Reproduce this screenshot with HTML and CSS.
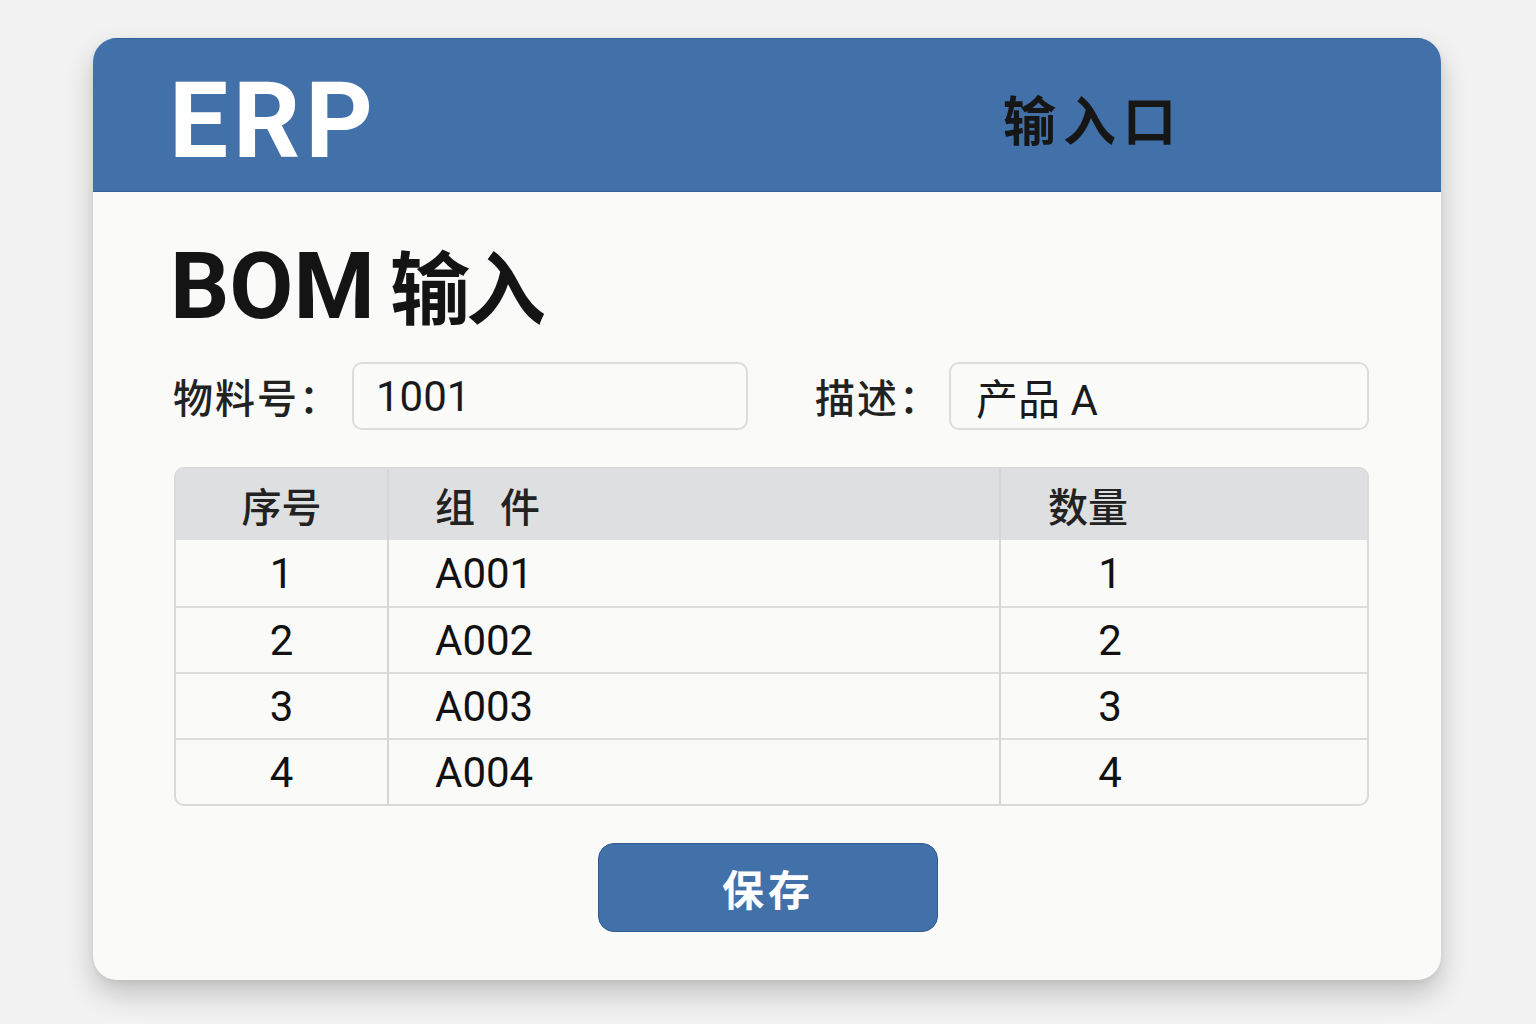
FILE: index.html
```html
<!DOCTYPE html>
<html lang="zh-CN">
<head>
    <meta charset="UTF-8">
    <meta name="viewport" content="width=device-width, initial-scale=1.0">
    <title>ERP - BOM 输入</title>
    <link rel="stylesheet" href="styles.css">
</head>
<body>
    <div class="card">
        <div class="topbar">
            <div class="brand">ERP</div>
            <div class="entry">输入口</div>
        </div>

        <div class="content">
            <h1>BOM <span class="title-cjk">输入</span></h1>

            <div class="form-row">
                <label for="item_no" class="label-item">物料号：</label>
                <input type="text" id="item_no" class="field field-item" value="1001">
                <label for="item_desc" class="label-desc">描述：</label>
                <input type="text" id="item_desc" class="field field-desc" value="产品 A">
            </div>

            <table class="bom-table">
                <colgroup>
                    <col class="w-no">
                    <col class="w-part">
                    <col class="w-qty">
                </colgroup>
                <thead>
                    <tr>
                        <th class="col-no">序号</th>
                        <th class="col-part">组&nbsp;件</th>
                        <th class="col-qty">数量</th>
                    </tr>
                </thead>
                <tbody>
                    <tr><td class="col-no">1</td><td class="col-part">A001</td><td class="col-qty">1</td></tr>
                    <tr><td class="col-no">2</td><td class="col-part">A002</td><td class="col-qty">2</td></tr>
                    <tr><td class="col-no">3</td><td class="col-part">A003</td><td class="col-qty">3</td></tr>
                    <tr><td class="col-no">4</td><td class="col-part">A004</td><td class="col-qty">4</td></tr>
                </tbody>
            </table>

            <div class="actions">
                <button type="button" class="save-btn">保存</button>
            </div>
        </div>
    </div>
</body>
</html>
```

FILE: styles.css
```css
body {
    margin: 0;
    padding-bottom: 40px;
    background-color: #f2f2f2;
    font-family: Roboto, "Noto Sans CJK SC", sans-serif;
    color: #1a1a1a;
}
.card {
    width: 1348px;
    margin: 38px 0 0 93px;
    background-color: #fafaf9;
    border-radius: 24px;
    overflow: hidden;
    box-shadow: 0 14px 28px rgba(0, 0, 0, 0.2), 0 2px 6px rgba(0, 0, 0, 0.06);
}
.topbar {
    box-sizing: border-box;
    height: 154px;
    background-color: #4270a9;
    border-top: 1px solid #35629a;
    border-bottom: 1px solid #35629a;
    display: flex;
    align-items: center;
    justify-content: space-between;
    padding: 0 258px 0 76px;
}
.brand {
    font-size: 105px;
    font-weight: 700;
    color: #fff;
    letter-spacing: 5px;
    line-height: 1;
    margin-top: 12px;
}
.entry {
    font-family: "Noto Sans CJK SC", sans-serif;
    font-size: 53px;
    font-weight: 700;
    color: #161616;
    letter-spacing: 7px;
    line-height: 1;
    margin-top: 6px;
}
.content {
    padding: 0 72px 48px 80px;
}
h1 {
    margin: 48px 0 0 -3px;
    font-size: 93px;
    font-weight: 700;
    line-height: 93px;
    color: #141414;
}
.title-cjk {
    font-family: "Noto Sans CJK SC", sans-serif;
    font-size: 80px;
    font-weight: 700;
    line-height: 1;
    margin-left: -8px;
    letter-spacing: -4px;
}
.form-row {
    display: flex;
    align-items: center;
    margin-top: 29px;
}
.form-row label {
    font-family: "Noto Sans CJK SC", sans-serif;
    font-size: 40px;
    font-weight: 500;
    color: #222;
    letter-spacing: 2px;
}
.label-desc {
    margin-left: 67px;
    width: 134px;
}
.field {
    box-sizing: border-box;
    height: 68px;
    border: 2px solid #dcdcdc;
    border-radius: 10px;
    background-color: #fbfbfa;
    font-family: Roboto, "Noto Sans CJK SC", sans-serif;
    font-size: 42px;
    color: #1a1a1a;
    padding: 0 0 0 22px;
    outline: none;
}
.field-item {
    width: 396px;
    margin-left: 11px;
}
.field-desc {
    width: 420px;
    padding-left: 25px;
}
.bom-table {
    margin-top: 37px;
    margin-left: 1px;
    width: 1195px;
    border-collapse: separate;
    border-spacing: 0;
    border: 2px solid #dadada;
    border-radius: 10px;
    overflow: hidden;
    table-layout: fixed;
}
.w-no {
    width: 211px;
}
.w-part {
    width: 612px;
}
.w-qty {
    width: 368px;
}
.bom-table th,
.bom-table td {
    padding: 0;
    border-left: 2px solid #d6d6d6;
}
.bom-table th:first-child,
.bom-table td:first-child {
    border-left: none;
}
.bom-table th {
    height: 71px;
    background-color: #dedfe0;
    font-family: "Noto Sans CJK SC", sans-serif;
    font-size: 40px;
    font-weight: 500;
    color: #222;
    text-align: left;
}
.bom-table td {
    height: 64px;
    border-top: 2px solid #dcdcdc;
    font-size: 42px;
    color: #111;
}
.bom-table thead + tbody tr:first-child td {
    border-top: none;
    height: 66px;
}
.bom-table .col-no {
    text-align: center;
}
.bom-table .col-part {
    padding-left: 46px;
    text-align: left;
}
.bom-table th.col-part {
    letter-spacing: 8px;
}
.bom-table th.col-qty {
    padding-left: 47px;
}
.bom-table td.col-qty {
    text-align: center;
    padding-right: 148px;
}
.actions {
    display: flex;
    justify-content: center;
    margin-top: 37px;
}
.save-btn {
    width: 340px;
    height: 89px;
    margin-left: -6px;
    background-color: #4270a9;
    border: 1px solid #2f5b92;
    border-radius: 16px;
    color: #fff;
    font-family: "Noto Sans CJK SC", sans-serif;
    font-size: 42px;
    font-weight: 700;
    letter-spacing: 4px;
    cursor: pointer;
}
.save-btn:hover {
    background-color: #3a6398;
}
```
